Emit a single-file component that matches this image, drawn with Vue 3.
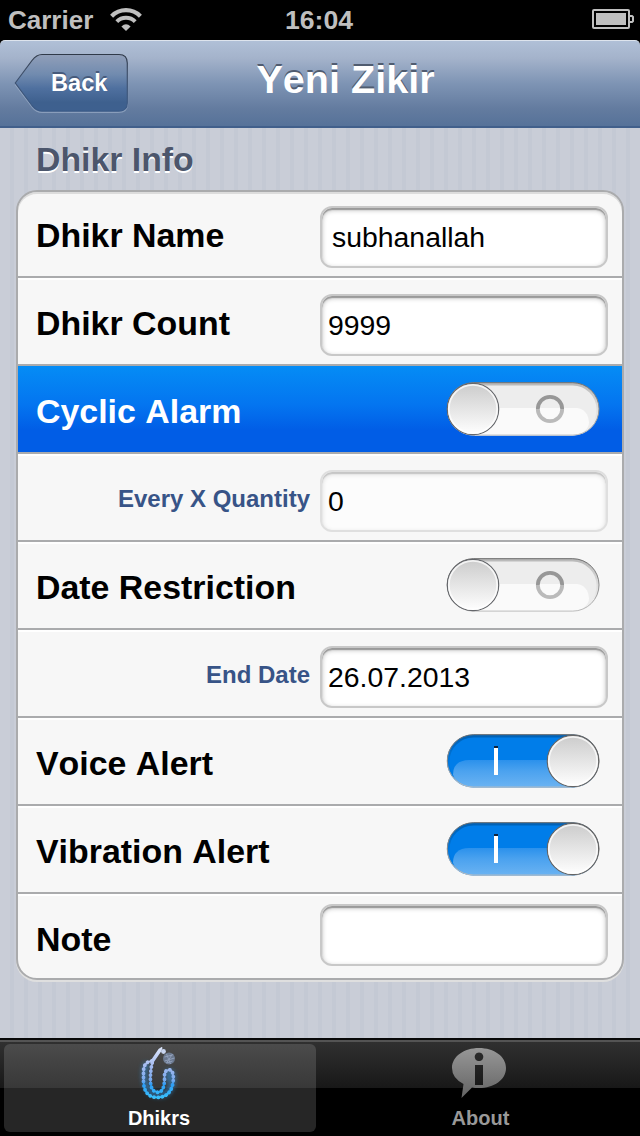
<script setup>
const rows = [
  { label: 'Dhikr Name', field: 'subhanallah', inset: true },
  { label: 'Dhikr Count', field: '9999' },
  { label: 'Cyclic Alarm', toggle: 'off', selected: true },
  { label: 'Every X Quantity', field: '0', sub: true, disabled: true },
  { label: 'Date Restriction', toggle: 'off' },
  { label: 'End Date', field: '26.07.2013', sub: true },
  { label: 'Voice Alert', toggle: 'on' },
  { label: 'Vibration Alert', toggle: 'on' },
  { label: 'Note', field: '' },
]
</script>

<template>
  <div class="screen">
    <header class="status">
      <div class="carrier">
        <span>Carrier</span>
        <svg width="32" height="24" viewBox="0 0 32 24" fill="none" stroke="#bfbfbf">
          <path d="M1.6 8.2 A20.3 20.3 0 0 1 30.4 8.2" stroke-width="4.2" />
          <path d="M6.8 13.6 A13 13 0 0 1 25.2 13.6" stroke-width="4" />
          <path d="M16 23 L11.4 18.4 Q16 14.2 20.6 18.4 Z" fill="#bfbfbf" stroke="none" />
        </svg>
      </div>
      <span class="time">16:04</span>
      <svg class="battery" width="42" height="20" viewBox="0 0 42 20">
        <rect x="1" y="1" width="36" height="18" rx="1" fill="none" stroke="#bfbfbf" stroke-width="2" />
        <rect x="4" y="4" width="30" height="12" fill="#bfbfbf" />
        <path d="M38 7 H40 L41 8 V12 L40 13 H38" fill="none" stroke="#bfbfbf" stroke-width="2" />
      </svg>
    </header>

    <nav class="navbar">
      <div class="back">
        <svg width="116" height="62" viewBox="0 0 116 62">
          <defs>
            <linearGradient id="backFill" x1="0" y1="0" x2="0" y2="1">
              <stop offset="0" stop-color="#919fb9" />
              <stop offset=".35" stop-color="#718baf" />
              <stop offset=".6" stop-color="#4f709f" />
              <stop offset=".85" stop-color="#3e608e" />
              <stop offset="1" stop-color="#3e608f" />
            </linearGradient>
            <linearGradient id="backEdge" x1="0" y1="0" x2="0" y2="1">
              <stop offset="0" stop-color="#303a49" />
              <stop offset=".3" stop-color="#3f4f69" />
              <stop offset="1" stop-color="#3b5b88" />
            </linearGradient>
          </defs>
          <path d="M30 3 H104 Q113.500 3 113.500 12 V51 Q113.500 59.500 104 59.500 H28 Q22.500 59.500 18 54 L1.5 32 L18 9 Q23 3 30 3Z" fill="none" stroke="#a5b6cf" stroke-opacity=".6" stroke-width="1.2" />
          <path d="M28 1.5 H105 Q113.300 1.500 113.300 10 V50 Q113.300 58 105 58 H28 Q22.500 58 18 52.500 L1.300 30 L18 7.500 Q22.500 1.500 28 1.500Z" fill="url(#backFill)" stroke="url(#backEdge)" stroke-width="1.200" />
        </svg>
        <span>Back</span>
      </div>
      <h1>Yeni Zikir</h1>
    </nav>

    <main class="content">
      <h2>Dhikr Info</h2>
      <div class="table">
        <div v-for="row in rows" :key="row.label" class="row" :class="{ selected: row.selected }">
          <span class="label" :class="{ sub: row.sub }">{{ row.label }}</span>
          <div v-if="row.toggle === undefined" class="field" :class="{ inset: row.inset, disabled: row.disabled }">{{ row.field }}</div>
          <svg v-else class="switch" width="156" height="56" viewBox="0 0.5 156 56">
            <g v-if="row.toggle === 'off'">
              <rect x="2" y="1" width="152" height="53" rx="26.5" fill="#ededed" />
              <path d="M30 26.500 H132 Q143 28 144 41 Q144 46 139 50 Q133 54 127 54 H30Z" fill="#fafafa" />
              <rect x="3" y="2.5" width="150" height="51" rx="25.5" fill="none" stroke="url(#trackSoft)" stroke-width="3" />
              <rect x="2.300" y="1.2" width="151.700" height="52.4" rx="26.2" fill="none" stroke="url(#trackEdge)" stroke-width="1" />
              <circle cx="105" cy="27.500" r="12.2" fill="none" stroke="url(#ring)" stroke-width="3.8" />
              <circle cx="28" cy="27.5" r="25.700" fill="url(#knob)" stroke="#65676b" stroke-width="1.2" />
              <circle cx="28" cy="27.5" r="24.2" fill="none" stroke="#fff" stroke-opacity=".75" stroke-width="1.800" />
            </g>
            <g v-else>
              <rect x="2" y="1" width="152" height="53" rx="26.5" fill="#007de9" />
              <path d="M130 26.500 H24 Q8 27 8 41 Q11 53 28 54 H130Z" fill="url(#gloss)" />
              <rect x="3" y="2.5" width="150" height="51" rx="25.5" fill="none" stroke="url(#trackSoft)" stroke-width="3" />
              <rect x="2.300" y="1.2" width="151.700" height="52.4" rx="26.2" fill="none" stroke="url(#trackEdge)" stroke-width="1" />
              <rect x="49" y="12.500" width="4" height="2" fill="#10243d" />
              <rect x="49" y="14.500" width="4" height="27" fill="#fff" />
              <circle cx="128" cy="27.5" r="25.700" fill="url(#knob)" stroke="#656565" stroke-width="1.2" />
              <circle cx="128" cy="27.5" r="24.2" fill="none" stroke="#fff" stroke-opacity=".75" stroke-width="1.800" />
            </g>
          </svg>
        </div>
      </div>
    </main>

    <footer class="tabs">
      <div class="tab active">
        <svg width="44" height="60" viewBox="0 0 44 60">
          <defs>
            <linearGradient id="beads" gradientUnits="userSpaceOnUse" x1="0" y1="4" x2="0" y2="56">
              <stop offset="0" stop-color="#dce5fb" />
              <stop offset=".35" stop-color="#a3baf0" />
              <stop offset=".62" stop-color="#78a9ed" />
              <stop offset=".7" stop-color="#2e9df5" />
              <stop offset="1" stop-color="#3ac5fd" />
            </linearGradient>
            <filter id="glow" x="-40%" y="-40%" width="180%" height="180%"><feGaussianBlur stdDeviation="2" /></filter>
          </defs>
          <g transform="translate(1.5 0)">
            <path d="M9 19 Q4 26 7 39 Q10 51 21 51 Q32 51 34 37 Q35 27 30 28 V38" fill="none" stroke="#3289ce" stroke-opacity=".6" stroke-width="6" filter="url(#glow)" />
            <g fill="none" stroke="url(#beads)" stroke-linecap="round">
              <path d="M13 17 Q5 18 5 28 V38 Q6 53.500 19 53.500 Q32 53 34.500 39 Q36 26 30.500 25.800 Q25.500 26 26 34 Q26 48 19.500 48.300 Q12.500 48 12 38 Q11.500 27 14 18" stroke-width="3.800" stroke-dasharray=".1 4" />
              <path d="M13 17 Q5 18 5 28 V38 Q6 53.500 19 53.500 Q32 53 34.500 39 Q36 26 30.500 25.800 Q25.500 26 26 34 Q26 48 19.500 48.300 Q12.500 48 12 38 Q11.500 27 14 18" stroke-width="1.500" />
              <path d="M14 17 L21.500 6" stroke-width="3.500" />
              <path d="M21.500 6 L23 4" stroke-width="2" />
            </g>
            <circle cx="25" cy="7.500" r="2.400" fill="#c8d5ef" />
            <circle cx="30.500" cy="14.500" r="6" fill="#7b8eae" opacity=".7" />
            <path d="M26 13 L34 11 M26 17 L36 14 M28 19 L34 17 M28 10 L32 20 M34 10 L28 19" stroke="#b0bfdd" stroke-width="1" opacity=".55" />
          </g>
        </svg>
        <span>Dhikrs</span>
      </div>
      <div class="tab about">
        <svg width="56" height="60" viewBox="0 0 56 60">
          <defs>
            <linearGradient id="bubble" x1="0" y1="0" x2="0" y2="1">
              <stop offset="0" stop-color="#979797" />
              <stop offset="1" stop-color="#636363" />
            </linearGradient>
          </defs>
          <path fill="url(#bubble)" fill-rule="evenodd" d="M28 4 C43 4 55 12.500 55 24 C55 36 43 44 28 44 Q24 44 21 43.500 L10.500 54 L12.500 40 Q1 34 1 24 C1 12.500 13 4 28 4Z M28 8.500 a4.300 4.300 0 1 0 .01 0Z M24 21 H32 V41 H24Z" />
        </svg>
        <span>About</span>
      </div>
    </footer>

    <svg class="paints" width="0" height="0">
      <defs>
        <linearGradient id="knob" x1="0" y1="0" x2="0" y2="1">
          <stop offset="0" stop-color="#cbcbcb" /><stop offset="1" stop-color="#fff" />
        </linearGradient>
        <linearGradient id="gloss" x1="0" y1="0" x2="0" y2="1">
          <stop offset="0" stop-color="#2b91ec" /><stop offset=".4" stop-color="#4ba2ef" /><stop offset="1" stop-color="#6bb3f2" />
        </linearGradient>
        <linearGradient id="trackEdge" x1="0" y1="0" x2="0" y2="1">
          <stop offset="0" stop-color="#6e6e6e" /><stop offset=".5" stop-color="#8d8d8d" /><stop offset="1" stop-color="#bdbdbd" />
        </linearGradient>
        <linearGradient id="trackSoft" x1="0" y1="0" x2="0" y2="1">
          <stop offset="0" stop-color="#000" stop-opacity=".22" /><stop offset=".5" stop-color="#000" stop-opacity=".06" /><stop offset=".8" stop-color="#000" stop-opacity="0" />
        </linearGradient>
        <linearGradient id="ring" x1="0" y1="0" x2="0" y2="1">
          <stop offset=".48" stop-color="#979797" /><stop offset=".48" stop-color="#bababa" />
        </linearGradient>
      </defs>
    </svg>
  </div>
</template>

<style>
body { margin: 0; background: #000; }
</style>

<style scoped>
.screen {
  position: relative;
  width: 640px;
  height: 1136px;
  display: flex;
  flex-direction: column;
  overflow: hidden;
  background: #000;
  font-family: "Liberation Sans", Arial, sans-serif;
  font-weight: bold;
  font-kerning: none;
}
.paints { position: absolute; }
h1, h2 { margin: 0; }
svg { display: block; flex: none; }

.status {
  height: 40px;
  box-sizing: border-box;
  padding: 0 6px 0 8px;
  display: grid;
  grid-template-columns: 1fr auto 1fr;
  align-items: center;
  color: #bfbfbf;
  font-size: 26px;
  line-height: 40px;
}
.time { font-size: 26.6px; margin-right: 4px; }
.carrier { display: flex; align-items: center; gap: 17px; }
.carrier svg { margin-top: -1px; }
.battery { justify-self: end; margin-top: -2px; }

.navbar {
  height: 88px;
  box-sizing: border-box;
  display: grid;
  grid-template-columns: 130px 1fr 79px;
  border-top: 1px solid #dde4ed;
  border-bottom: 2px solid #415f8b;
  border-radius: 5px 5px 0 0;
  background: linear-gradient(#b0c0d7, #a4b3cb 20%, #7e94b4 50%, #637b9f 80%, #567299);
  color: #fff;
}
.back { display: grid; margin: 12px 0 0 14px; width: 116px; height: 62px; }
.back svg, .back span { grid-area: 1 / 1; }
.back span {
  padding-left: 37px;
  font-size: 23.6px;
  line-height: 61px;
  text-shadow: 0 -2px 0 #465a7b;
  z-index: 1;
}
h1 {
  text-align: center;
  font-size: 39.6px;
  line-height: 76px;
  text-shadow: 0 -2px 0 #505c70;
}

.content {
  height: 910px;
  box-sizing: border-box;
  padding: 0 16px;
  background: repeating-linear-gradient(90deg, #c9cdd7 0 10px, #c4c9d4 10px 14px);
}
h2 {
  height: 62px;
  padding-left: 20px;
  font-size: 33.8px;
  line-height: 62px;
  color: #4c566c;
  text-shadow: 0 2px 0 #fff;
}
.table {
  height: 786px;
  border: 2px solid #aaabad;
  border-radius: 21px;
  background: #f7f7f7;
  overflow: hidden;
  box-shadow: 0 2px 0 #dfdfdf, inset 0 2px 0 #dcdcdc;
}
.row {
  height: 88px;
  box-sizing: border-box;
  border-bottom: 2px solid #aaabad;
  box-shadow: inset 0 2px 0 #fff;
  display: flex;
  align-items: flex-start;
  justify-content: space-between;
  padding: 0 14px 0 18px;
}
.row:first-child { margin-top: -2px; box-shadow: none; }
.row:last-child { border: 0; }
.row.selected { background: linear-gradient(#058cf5, #0475f0 45%, #015de6 75%, #015de6); box-shadow: none; color: #fff; }
.label { font-size: 33.9px; line-height: 90px; white-space: nowrap; }
.sub {
  width: 274px;
  text-align: right;
  font-size: 24px;
  color: #385487;
}
.field {
  width: 288px;
  height: 62px;
  box-sizing: border-box;
  margin-top: 16px;
  padding-left: 6px;
  border: 2px solid #c8c8c8;
  border-radius: 12px;
  background: #fff;
  box-shadow: inset 0 2px 1px #9a9a9a, inset 0 2px 5px rgba(0, 0, 0, .28);
  color: #000;
  font-size: 28.4px;
  font-weight: normal;
  line-height: 58px;
}
.field.inset { padding-left: 10px; }
.field.disabled {
  border-color: #dfdfdf;
  background: #fcfcfc;
  box-shadow: inset 0 2px 1px #c6c6c6, inset 0 2px 5px rgba(0, 0, 0, .15);
}
.row:last-child .field { margin-top: 10px; }
.switch { margin: 16px 7px 0 0; }

.tabs {
  height: 98px;
  box-sizing: border-box;
  border-top: 2px solid #080808;
  padding: 4px;
  display: grid;
  grid-template-columns: 312px 1fr;
  gap: 4px;
  background: linear-gradient(#545454 0 2px, #303030 2px, #181818 48px, #000 48px);
  font-size: 20px;
  line-height: 24px;
}
.tab {
  height: 88px;
  display: flex;
  flex-direction: column;
  align-items: center;
  border-radius: 6px;
  color: #999;
}
.tab svg { margin-bottom: 2px; }
.tab.about { padding-left: 5px; }
.tab.about svg { margin-right: 3px; }
.tab.active { padding-right: 2px; color: #fff; background: linear-gradient(#4b4b4b, #383838 44px, #262626 44px); }
</style>
